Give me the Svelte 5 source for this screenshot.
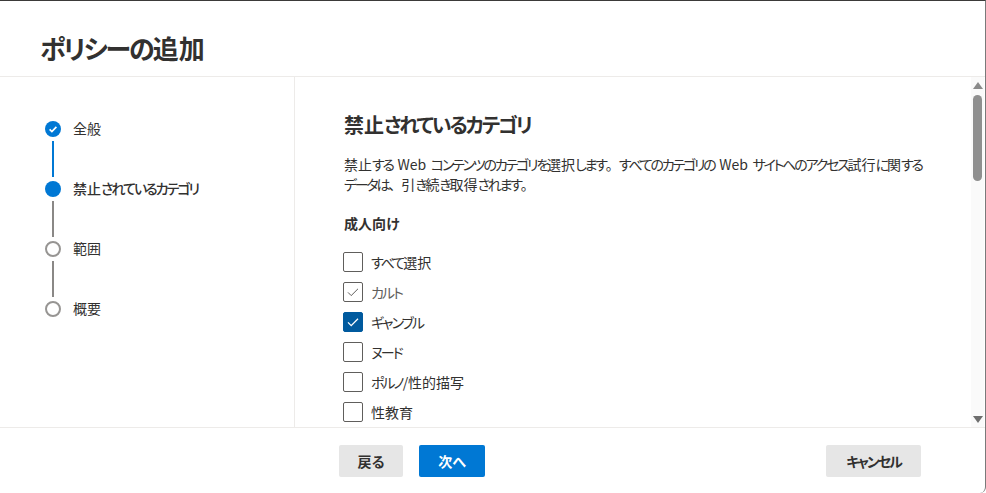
<script>
  const steps = [
    { label: '全般', state: 'done' },
    { label: '禁止されているカテゴリ', state: 'current' },
    { label: '範囲', state: 'todo' },
    { label: '概要', state: 'todo' }
  ];
  const options = [
    { label: 'すべて選択', state: 'off' },
    { label: 'カルト', state: 'muted' },
    { label: 'ギャンブル', state: 'on' },
    { label: 'ヌード', state: 'off' },
    { label: 'ポルノ/性的描写', state: 'off' },
    { label: '性教育', state: 'off' }
  ];
  const intro = [
    '禁止する Web コンテンツのカテゴリを選択します。すべてのカテゴリの Web サイトへのアクセス試行に関する',
    'データは、引き続き取得されます。'
  ];
  const runs = (text) => text.split(/([\u3040-\u30ff]+|[。、])/);
</script>

{#snippet t(text)}{#each runs(text) as r, i}{#if i % 2}<span class={r === '。' || r === '、' ? 'pu' : 'k'}>{r}</span>{:else}{r}{/if}{/each}{/snippet}

<div class="panel">
  <header class="head"><h1>{@render t('ポリシーの追加')}</h1></header>
  <div class="middle">
    <nav class="steps">
      {#each steps as s, i}
        <div class="step">
          <div class="rail">
            <span class="dot {s.state}">
              {#if s.state === 'done'}
                <svg width="16" height="16" viewBox="0 0 16 16"><path d="M4.6 8.3l2.3 2.2 4.5-4.6" fill="none" stroke="#fff" stroke-width="1.7"/></svg>
              {/if}
            </span>
            {#if i < steps.length - 1}
              <span class="line" class:blue={s.state === 'done'}></span>
            {/if}
          </div>
          <span class="step-label" class:strong={s.state === 'current'}>{@render t(s.label)}</span>
        </div>
      {/each}
    </nav>
    <main class="content">
      <section class="scroll">
        <h2>{@render t('禁止されているカテゴリ')}</h2>
        <p>{#each intro as line}<span class="ln">{@render t(line)}</span>{/each}</p>
        <h3>成人向け</h3>
        <div class="options">
          {#each options as o}
            <div class="opt">
              <span class="box {o.state}">
                {#if o.state !== 'off'}
                  <svg width="14" height="14" viewBox="0 0 14 14"><path d="M2 7.4l3.2 3.2L12 3.8" fill="none" stroke={o.state === 'on' ? '#fff' : '#605e5c'} stroke-width={o.state === 'on' ? 1.3 : 1}/></svg>
                {/if}
              </span>
              <span class="opt-label" class:dim={o.state === 'muted'}>{@render t(o.label)}</span>
            </div>
          {/each}
        </div>
      </section>
      <div class="bar">
        <span class="arrow up"></span>
        <span class="thumb"></span>
        <span class="fill"></span>
        <span class="arrow down"></span>
      </div>
    </main>
  </div>
  <footer class="foot">
    <div class="nav-btns">
      <button class="btn">戻る</button>
      <button class="btn primary">次へ</button>
    </div>
    <button class="btn cancel">{@render t('キャンセル')}</button>
  </footer>
</div>

<style>
  :global(body) { margin: 0; background: #fff; }
  .panel {
    width: 986px; height: 493px; box-sizing: border-box;
    border-top: 1px solid #3b3a39; border-right: 1px solid #7a7a7a;
    border-bottom-right-radius: 6px;
    display: flex; flex-direction: column; overflow: hidden;
    font-family: "Noto Sans CJK JP", "Liberation Sans", sans-serif; color: #323130; background: #fff;
    font-feature-settings: "palt";
  }
  .k { letter-spacing: -2px; }
  h2 .k { letter-spacing: -2.2px; }
  p .k { letter-spacing: -2.2px; }
  .pu { font-feature-settings: normal; letter-spacing: -1px; }
  .head { height: 76px; box-sizing: border-box; border-bottom: 1px solid #edebe9; padding: 29px 0 0 40px; flex: none; }
  h1 { margin: 0; font-size: 26px; line-height: 36px; font-weight: 600; }
  .middle { display: flex; height: 350px; flex: none; border-bottom: 1px solid #edebe9; box-sizing: content-box; }
  .steps { width: 295px; flex: none; box-sizing: border-box; border-right: 1px solid #edebe9; padding: 44px 0 0 45px; }
  .step { display: flex; height: 60px; gap: 12px; }
  .rail { width: 16px; display: flex; flex-direction: column; align-items: center; gap: 4px; flex: none; }
  .dot { width: 16px; height: 16px; box-sizing: border-box; border-radius: 50%; flex: none; display: block; }
  .dot svg { display: block; }
  .dot.done, .dot.current { background: #0078d4; }
  .dot.todo { border: 2px solid #979593; background: #fff; }
  .line { width: 2px; height: 36px; background: #8a8886; flex: none; }
  .line.blue { background: #0078d4; }
  .step-label { font-size: 14px; line-height: 16px; margin-top: -1px; }
  .step-label.strong { font-weight: 500; }
  .content { flex: 1; display: flex; min-width: 0; }
  .scroll { flex: 1; padding: 34px 0 0 49px; overflow: hidden; min-width: 0; }
  h2 { margin: 0; font-size: 20px; line-height: 28px; font-weight: 600; }
  p { margin: 15px 0 0; font-size: 14px; line-height: 20px; white-space: nowrap; word-spacing: 1.5px; }
  .ln { display: block; }
  h3 { margin: 19px 0 0; font-size: 14px; line-height: 20px; font-weight: 600; }
  .options { margin-top: 14px; margin-left: -1px; display: flex; flex-direction: column; }
  .opt { display: flex; align-items: center; height: 30px; gap: 8px; flex: none; }
  .box { width: 20px; height: 20px; box-sizing: border-box; border: 1px solid #605e5c; border-radius: 2px; display: flex; align-items: center; justify-content: center; flex: none; }
  .box.on { background: #005a9e; border-color: #005a9e; }
  .opt-label { font-size: 14px; line-height: 20px; }
  .opt-label.dim { color: #605e5c; }
  .bar { width: 13px; margin-right: 1px; background: #fafafa; display: flex; flex-direction: column; align-items: center; flex: none; padding: 5px 0 4px; box-sizing: border-box; }
  .arrow { width: 0; height: 0; border-left: 5px solid transparent; border-right: 5px solid transparent; flex: none; }
  .arrow.up { border-bottom: 7px solid #8a8a8a; }
  .arrow.down { border-top: 7px solid #6e6e6e; }
  .thumb { width: 9px; height: 86px; border-radius: 5px; background: #8f8f8f; margin-top: 6px; flex: none; }
  .fill { flex: 1; }
  .foot { flex: 1; display: flex; align-items: flex-start; justify-content: space-between; padding: 17px 64px 0 339px; box-sizing: border-box; }
  .nav-btns { display: flex; gap: 16px; }
  .btn { height: 32px; min-width: 64px; padding: 0; box-sizing: border-box; border: 0; border-radius: 2px; background: #e6e6e6; color: #323130; font-family: inherit; font-feature-settings: "palt"; font-size: 14px; font-weight: 600; line-height: 32px; white-space: nowrap; }
  .btn.primary { background: #0078d4; color: #fff; width: 66px; }
  .btn.cancel { width: 95px; }
</style>
